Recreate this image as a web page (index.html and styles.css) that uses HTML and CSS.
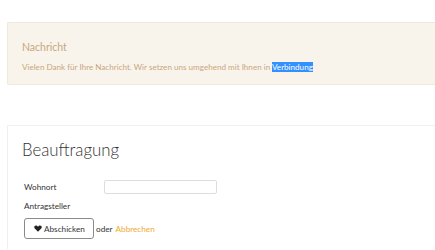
FILE: index.html
```html
<!DOCTYPE html>
<html lang="de">
<head>
<meta charset="utf-8">
<link rel="stylesheet" href="styles.css">
</head>
<body>
<div class="page">
  <div class="alert">
    <div class="alert-title">Nachricht</div>
    <p class="alert-text">Vielen Dank für Ihre Nachricht. Wir setzen uns umgehend mit Ihnen in <span class="sel">Verbindung</span></p>
  </div>
  <div class="panel">
    <h1 class="panel-title">Beauftragung</h1>
    <div class="form">
      <div class="row">
        <label class="label">Wohnort</label>
        <input class="input" type="text">
      </div>
      <div class="row">
        <label class="label">Antragsteller</label>
      </div>
      <div class="actions">
        <button class="btn" type="button"><svg class="icon" viewBox="0 0 16 14" width="8" height="7"><path d="M8 13.5 L1.6 7.2 C-0.4 5.2 0.4 1 4 1 C6 1 7.2 2.3 8 3.4 C8.8 2.3 10 1 12 1 C15.6 1 16.4 5.2 14.4 7.2 Z" fill="#222"/></svg>Abschicken</button>
        <span class="or">oder</span>
        <a class="cancel" href="#">Abbrechen</a>
      </div>
    </div>
  </div>
</div>
</body>
</html>
```
FILE: styles.css
```css
html, body {
  margin: 0;
  padding: 0;
  background: #fff;
  overflow: hidden;
}
body {
  font-family: Lato, "Open Sans", sans-serif;
  color: #333;
}
.page {
  width: 435px;
  height: 250px;
  padding: 22px 0 0 7px;
  box-sizing: border-box;
}
.alert {
  background: #f8f4ec;
  border: 1px solid #efe8dc;
  border-right: none;
  border-radius: 2px 0 0 2px;
  height: 61px;
  padding: 0 14px;
  box-sizing: content-box;
}
.alert-title {
  color: #c9a77c;
  font-size: 10.5px;
  line-height: 12px;
  margin-top: 18px;
}
.alert-text {
  color: #c9a77c;
  font-size: 8.1px;
  line-height: 12px;
  margin: 8px 0 0;
}
.sel {
  background: #3390ff;
  color: #fff;
}
.panel {
  margin-top: 40px;
  border: 1px solid #f0f0f0;
  border-right: none;
  border-bottom: none;
  padding: 0 14px;
  height: 123px;
}
.panel-title {
  font-weight: 300;
  font-size: 16.8px;
  line-height: 20px;
  margin: 14px 0 0;
  color: #333;
}
.form {
  margin-top: 19px;
  padding-left: 2px;
}
.row {
  display: flex;
  align-items: center;
  height: 16px;
  margin-bottom: 3px;
}
.label {
  width: 80px;
  font-size: 8.2px;
  color: #333;
}
.input {
  width: 113px;
  height: 14px;
  box-sizing: border-box;
  border: 1px solid #ddd;
  border-radius: 2px;
  padding: 0;
  margin: 0;
}
.actions {
  display: flex;
  align-items: center;
  margin-top: 4px;
}
.btn {
  display: flex;
  align-items: center;
  gap: 2px;
  height: 21px;
  width: 70px;
  box-sizing: border-box;
  border: 1px solid #8a8a8a;
  border-radius: 3px;
  background: #fff;
  font-family: inherit;
  font-size: 8.2px;
  color: #333;
  padding: 0 0 0 9px;
  margin: 0;
}
.icon {
  display: block;
}
.or {
  font-size: 8.2px;
  margin-left: 2px;
  color: #333;
}
.cancel {
  font-size: 8.2px;
  color: #f0a92e;
  text-decoration: none;
  margin-left: 3px;
}
```
